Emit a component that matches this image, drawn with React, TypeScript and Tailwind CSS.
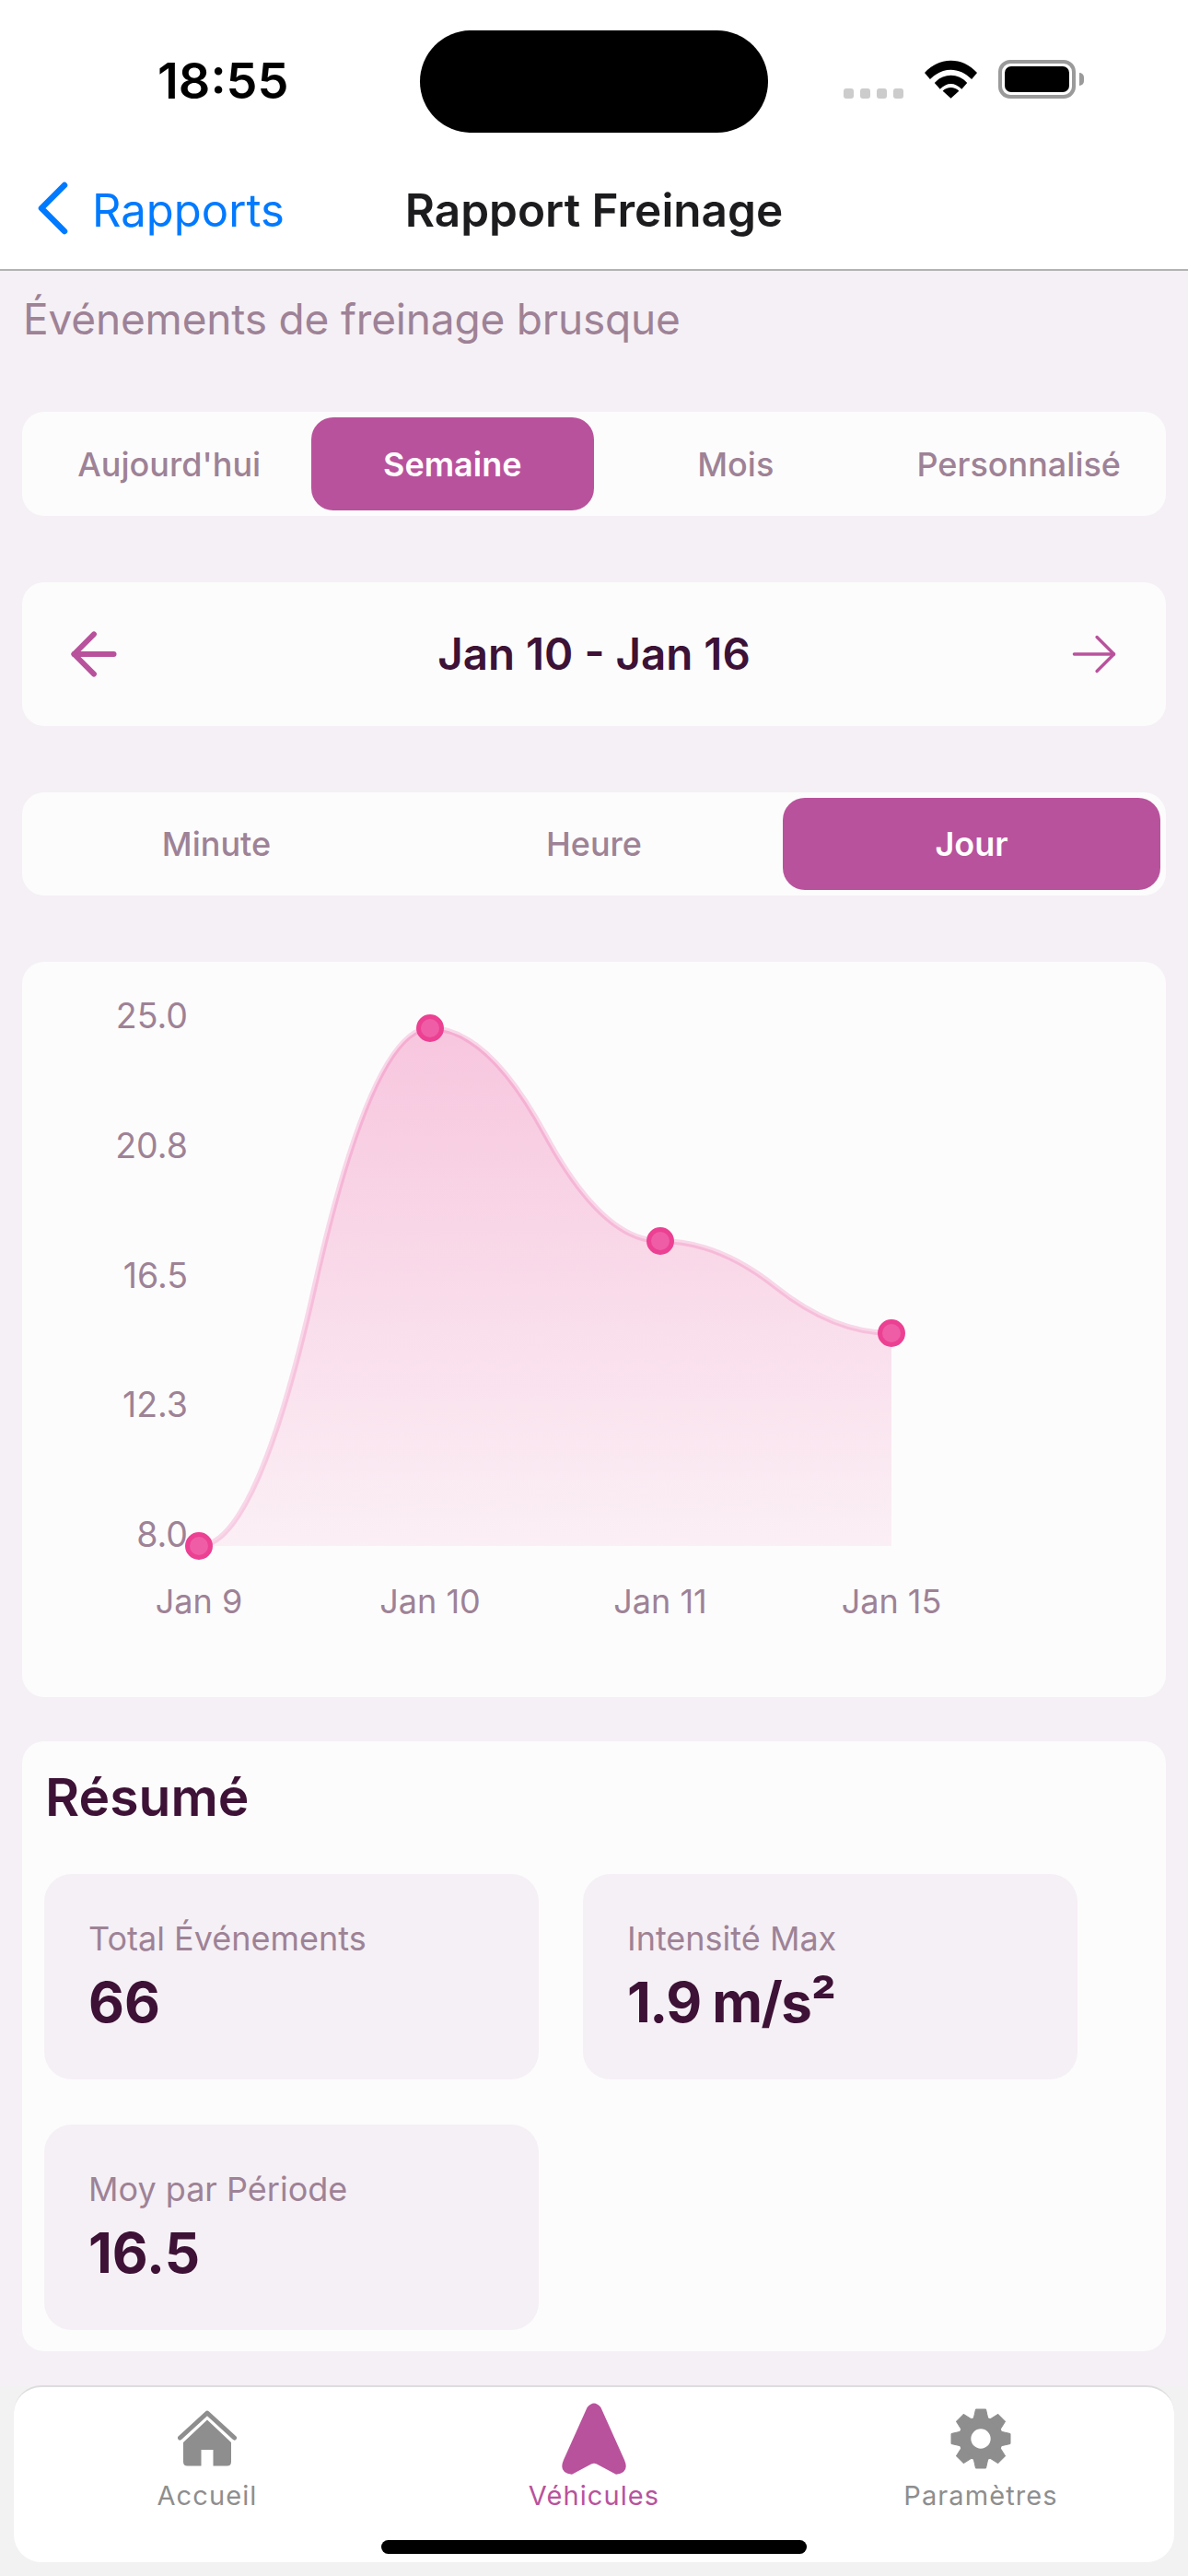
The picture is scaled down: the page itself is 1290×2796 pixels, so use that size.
import React from "react";
import { ArrowLeft } from "lucide-react";

const xs = [216, 467, 717, 968];
const ys = [1678, 1116, 1347, 1447].map((y) => y - 1044);
const yLabels = ["25.0", "20.8", "16.5", "12.3", "8.0"];
const xLabels = ["Jan 9", "Jan 10", "Jan 11", "Jan 15"];

const curve = () => {
  let d = `M${xs[0] - 24},${ys[0]}`;
  for (let i = 0; i < xs.length - 1; i++) {
    const x0 = xs[i] - 24;
    const x1 = xs[i + 1] - 24;
    const mx = (x0 + x1) / 2;
    const my = (ys[i] + ys[i + 1]) / 2;
    d += ` Q${(mx + x0) / 2},${ys[i]} ${mx},${my} Q${(mx + x1) / 2},${ys[i + 1]} ${x1},${ys[i + 1]}`;
  }
  return d;
};

const Segment = ({ items, active, pad }: { items: string[]; active: string; pad?: string }) => (
  <div className={`flex bg-[#fcfcfc] rounded-[24px] p-[6px] ${pad || ""}`}>
    {items.map((item) => (
      <div
        key={item}
        className={`flex-1 flex items-center justify-center rounded-[24px] text-[36px] ${
          item === active ? "bg-[#b9529c] text-white font-semibold" : "text-[#9e8296] font-medium"
        }`}
      >
        {item}
      </div>
    ))}
  </div>
);

const Stat = ({ label, value, tight }: { label: string; value: string; tight?: boolean }) => (
  <div className="w-[537px] h-[223px] bg-[#f5f0f5] rounded-[30px] pl-[48px] pt-[48px]">
    <div className="text-[36px] leading-[44px] text-[#9e8296]">{label}</div>
    <div className={`text-[60px] leading-[72px] mt-[11px] font-bold text-[#3d1236] ${tight ? "tracking-[-1.5px]" : ""}`}>{value}</div>
  </div>
);

const HomeIcon = () => (
  <svg width="64" height="62" viewBox="0 0 64 62" fill="#8e8e8e">
    <path d="M2.5 30 L32 3 L61.5 30" fill="none" stroke="#8e8e8e" strokeWidth="5" strokeLinecap="round" strokeLinejoin="round" />
    <path d="M32 10.5 L58 35 V56 Q58 60.5 53.5 60.5 H38.5 V43 H25.5 V60.5 H10.5 Q6 60.5 6 56 V35 Z" />
  </svg>
);

const NavIcon = () => (
  <svg width="70" height="78" viewBox="0 0 70 78" fill="#b9529c">
    <path d="M27.6 5 Q35 -4 42.4 5 L68 62 Q74 76 59 77.7 L38 66.5 Q35 65 32 66.5 L11 77.7 Q-4 76 2 62 Z" />
  </svg>
);

const GearIcon = () => (
  <svg width="66" height="66" viewBox="-33 -33 66 66" fill="#8e8e8e">
    <circle r="17.4" fill="none" stroke="#8e8e8e" strokeWidth="13.4" />
    {[0, 45, 90, 135, 180, 225, 270, 315].map((a) => (
      <polygon
        key={a}
        points="-5.5,-32 5.5,-32 8,-21 -8,-21"
        transform={`rotate(${a})`}
        stroke="#8e8e8e"
        strokeWidth="1"
        strokeLinejoin="round"
      />
    ))}
  </svg>
);

const Tab = ({ label, active, icon }: { label: string; active?: boolean; icon: React.ReactNode }) => (
  <div className={`flex-1 flex flex-col items-center ${active ? "text-[#b9529c]" : "text-[#8e8e8e]"}`}>
    <div className="h-[84px] flex items-center justify-center">{icon}</div>
    <div className="text-[29px] leading-[36px] font-normal tracking-[1.1px] mt-[2px]">{label}</div>
  </div>
);

export default function App() {
  return (
    <div className="w-[1290px] h-[2796px] flex flex-col bg-[#f2f2f2] overflow-hidden font-['Inter',sans-serif]">
      {/* status bar */}
      <div className="h-[147px] bg-white flex items-start">
        <div className="w-[456px] pl-[171px] pt-[53px] text-[54px] leading-[70px] font-semibold text-black">18:55</div>
        <div className="w-[378px] h-[111px] mt-[33px] bg-black rounded-full" />
        <div className="ml-[82px] pt-[65px] flex items-start">
          <div className="flex gap-[7px] mt-[31px]">
            {[0, 1, 2, 3].map((i) => (
              <div key={i} className="w-[11px] h-[11px] rounded-[3px] bg-[#cccccc]" />
            ))}
          </div>
          <svg width="57" height="42" viewBox="0 0 58 42" className="ml-[23px]">
            <path d="M0 14 C16 -4 42 -4 58 14 L52 21 C38 7 20 7 6 21Z M11 25 C21 14 37 14 47 25 L41 32 C33 24 25 24 17 32Z M20 34 C25 29 33 29 38 34 L29 42Z" fill="#000" />
          </svg>
          <div className="ml-[23px] w-[84px] h-[42px] rounded-[13px] border-[4px] border-[#9a9a9a] p-[3px]">
            <div className="w-full h-full bg-black rounded-[7px]" />
          </div>
          <div className="w-[5px] h-[14px] ml-[4px] mt-[14px] bg-[#9a9a9a] rounded-r-full" />
        </div>
      </div>

      {/* nav */}
      <div className="h-[147px] bg-white border-b-[2px] border-[#b3b3b3] flex items-center relative">
        <div className="flex items-center text-[#007aff] pl-[40px] pt-[18px]">
          <svg width="34" height="58" viewBox="0 0 34 58" className="-mt-[6px]">
            <polyline points="30,4 5,29 30,54" fill="none" stroke="#007aff" strokeWidth="6.5" strokeLinecap="round" strokeLinejoin="round" />
          </svg>
          <span className="text-[49px] ml-[26px]">Rapports</span>
        </div>
        <div className="absolute left-0 right-0 text-center pt-[18px] text-[49.5px] font-semibold text-[#1c1c1e]">Rapport Freinage</div>
      </div>

      {/* content */}
      <div className="flex-1 bg-[#f5f0f5] px-[24px] flex flex-col">
        <div className="h-[60px] pt-[24px] pl-px text-[46px] leading-[56px] tracking-[-0.18px] text-[#9e8296] whitespace-nowrap">
          Événements de freinage brusque
        </div>
        <Segment items={["Aujourd'hui", "Semaine", "Mois", "Personnalisé"]} active="Semaine" pad="h-[113px] mt-[93px]" />
        <div className="h-[156px] mt-[72px] bg-[#fcfcfc] rounded-[24px] flex items-center justify-between px-[41px]">
          <ArrowLeft size={74} color="#b9529c" strokeWidth={1.9} />
          <div className="text-[47.5px] font-semibold text-[#3d1236]">Jan 10 - Jan 16</div>
          <svg width="74" height="74" viewBox="0 0 24 24" fill="none" stroke="#b9529c" strokeWidth="1.1" strokeLinecap="round" strokeLinejoin="round">
            <path d="M5 12h14" />
            <path d="M13 6l6 6-6 6" />
          </svg>
        </div>
        <Segment items={["Minute", "Heure", "Jour"]} active="Jour" pad="h-[112px] mt-[72px]" />

        {/* chart */}
        <div className="h-[798px] mt-[72px] bg-[#fcfcfc] rounded-[24px] overflow-hidden">
          <svg width="1242" height="798" viewBox="0 0 1242 798">
            <defs>
              <linearGradient id="fill" x1="0" y1="0" x2="0" y2="1">
                <stop offset="0%" stopColor="#ec4899" stopOpacity="0.3" />
                <stop offset="100%" stopColor="#ec4899" stopOpacity="0.07" />
              </linearGradient>
            </defs>
            <path d={`${curve()} L${xs[3] - 24},${ys[0]} L${xs[0] - 24},${ys[0]} Z`} fill="url(#fill)" />
            <path d={curve()} fill="none" stroke="#ec4899" strokeOpacity="0.2" strokeWidth="6" />
            {xs.map((x, i) => (
              <circle key={x} cx={x - 24} cy={ys[i]} r="12.5" fill="#ef5da6" stroke="#ec4093" strokeWidth="5" />
            ))}
            {yLabels.map((l, i) => (
              <text key={l} x="180" y={[72, 213, 354, 494, 635][i]} textAnchor="end" fontSize="37.5" fill="#9e8296">
                {l}
              </text>
            ))}
            {xLabels.map((l, i) => (
              <text key={l} x={xs[i] - 24} y="707" textAnchor="middle" fontSize="36" fill="#9e8296">
                {l}
              </text>
            ))}
          </svg>
        </div>

        {/* summary */}
        <div className="h-[662px] mt-[48px] bg-[#fcfcfc] rounded-[24px] px-[24px] pt-[30px]">
          <div className="text-[57px] leading-[72px] font-semibold text-[#3d1236] -mt-[5px] pb-[5px] pl-px">Résumé</div>
          <div className="flex flex-wrap gap-x-[48px] gap-y-[49px] mt-[42px]">
            <Stat label="Total Événements" value="66" />
            <Stat label="Intensité Max" value="1.9 m/s²" tight />
            <Stat label="Moy par Période" value="16.5" />
          </div>
        </div>
        <div className="h-[37px]" />
      </div>

      {/* tabs */}
      <div className="h-[192px] mx-[15px] bg-white rounded-[30px] border-t-[2px] border-[#dddddd] flex pt-[14px] relative">
        <Tab label="Accueil" icon={<HomeIcon />} />
        <Tab label="Véhicules" active icon={<NavIcon />} />
        <Tab label="Paramètres" icon={<GearIcon />} />
        <div className="absolute left-[399px] bottom-[9px] w-[462px] h-[15px] bg-black rounded-full" />
      </div>
      <div className="h-[15px]" />
    </div>
  );
}
